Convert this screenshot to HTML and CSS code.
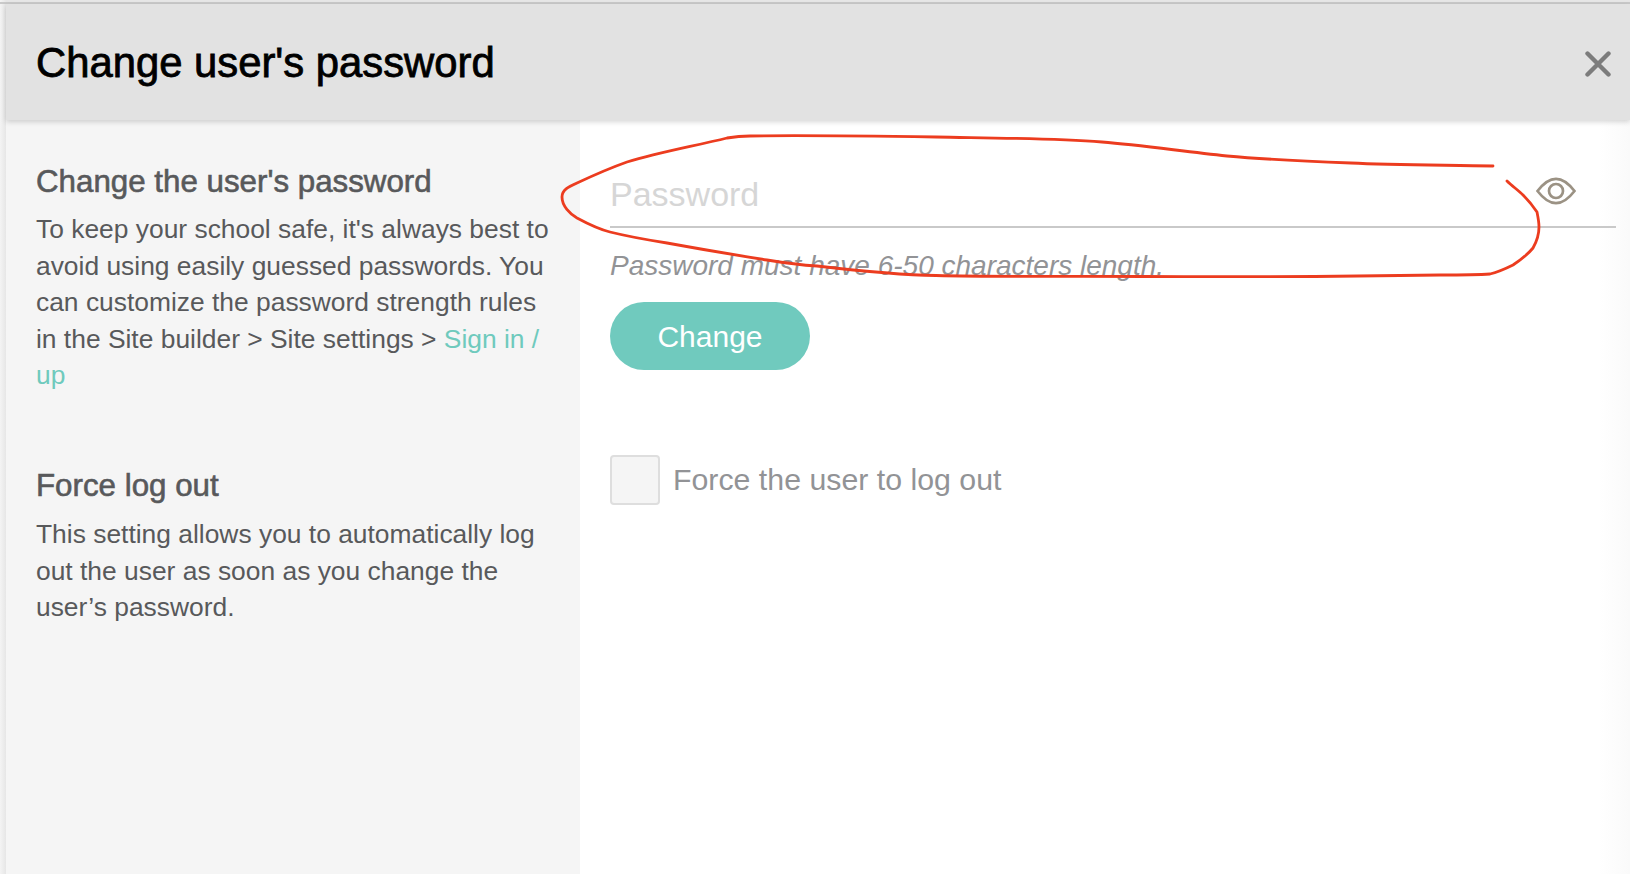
FILE: index.html
```html
<!DOCTYPE html>
<html lang="en">
<head>
<meta charset="utf-8">
<title>Change user's password</title>
<link rel="stylesheet" href="styles.css">
</head>
<body>
<div class="page">
  <div class="top-rule"></div>
  <div class="modal">
    <header class="modal-header">
      <h1 class="modal-title">Change user's password</h1>
      <svg class="close-icon" viewBox="0 0 26 26" width="26" height="26" aria-label="Close"><path d="M2.5 2.5 L23.5 23.5 M23.5 2.5 L2.5 23.5"/></svg>
    </header>
    <div class="modal-body">
      <aside class="side">
        <section class="side-block">
          <h2 class="side-title">Change the user's password</h2>
          <p class="side-text">To keep your school safe, it's always best to avoid using easily guessed passwords. You can customize the password strength rules in the Site builder &gt; Site settings &gt; <a class="side-link">Sign in / up</a></p>
        </section>
        <section class="side-block second">
          <h2 class="side-title">Force log out</h2>
          <p class="side-text">This setting allows you to automatically log out the user as soon as you change the user’s password.</p>
        </section>
      </aside>
      <main class="form">
        <div class="field">
          <input class="field-input" type="text" placeholder="Password">
          <svg class="eye-icon" viewBox="0 0 40 28" width="40" height="28"><path d="M1.5 14 C8 5.5 14 1.8 20 1.8 C26 1.8 32 5.5 38.5 14 C32 22.5 26 26.2 20 26.2 C14 26.2 8 22.5 1.5 14 Z"/><circle cx="20" cy="14" r="7"/></svg>
        </div>
        <p class="hint">Password must have 6-50 characters length.</p>
        <button class="change-btn" type="button">Change</button>
        <label class="check-row">
          <span class="check-box"></span>
          <span class="check-label">Force the user to log out</span>
        </label>
      </main>
    </div>
  </div>
  <svg class="ink" viewBox="0 0 1630 874" width="1630" height="874"><path d="M1493 166 C1440 165 1390 165 1351 163 C1300 161 1260 159 1227 156 C1180 151 1140 145 1102 142 C1050 138 990 138 936 137 C870 136 800 135 750 136 C740 136 733 137 727 138 C695 146 660 152 627 162 C610 168 592 176 577 183 C568 187 562 190 562 197 C562 206 570 214 577 218 C590 225 598 229 610 232 C630 237 648 240 667 243 C700 249 735 255 767 260 C785 263 800 265 817 266 C860 271 900 275 936 275.5 C1000 277 1070 276 1144 276.5 C1260 277 1380 276 1440 275 C1460 275 1476 275 1490 274 C1498 272 1505 269 1513 265 C1522 259 1528 254 1533 248 C1537 241 1539 235 1539 227 C1539 222 1538 217 1537 212 C1533 206 1528 200 1523 195 C1518 190 1512 186 1507 181"/></svg>
</div>
</body>
</html>
```
FILE: styles.css
```css
* { box-sizing: border-box; }
html, body { margin: 0; height: 100%; overflow: hidden; }
body { font-family: "Liberation Sans", Arial, sans-serif; background: #f0f0f0; }
.page { position: relative; display: flex; flex-direction: column; width: 1630px; height: 874px; background: linear-gradient(90deg, #f4f4f4, #e6e6e6 6px); overflow: hidden; }
.top-rule { flex: none; height: 2px; margin-top: 2px; background: #c9c9c9; }
.modal { flex: 1; display: flex; flex-direction: column; min-height: 0; margin-left: 6px; background: #fff; }
.modal-header { position: relative; z-index: 1; flex: none; display: flex; align-items: center; justify-content: space-between; height: 116px; padding: 2px 19px 0 30px; background: #e2e2e2; box-shadow: 0 2px 5px rgba(0,0,0,.16); }
.modal-title { margin: 0; font-size: 41.8px; font-weight: 400; color: #000; -webkit-text-stroke: .8px #000; }
.close-icon { margin-top: 1px; fill: none; stroke: #7c7c7c; stroke-width: 4.4; stroke-linecap: round; }
.modal-body { flex: 1; display: flex; min-height: 0; }
.side { flex: none; width: 574px; padding: 43px 24px 0 30px; background: #f5f5f5; color: #58595b; }
.side-block.second { margin-top: 73px; }
.side-title { margin: 0 0 10px; font-size: 31.3px; line-height: 38px; font-weight: 400; -webkit-text-stroke: .6px #58595b; }
.side-block.second .side-title { margin-bottom: 11px; }
.side-text { margin: 0; font-size: 26.4px; line-height: 36.6px; }
.side-link { color: #6fcabd; }
.form { flex: 1; padding: 36px 14px 0 30px; background: linear-gradient(90deg, #fff 97%, #fafafa 100%); }
.field { display: flex; align-items: center; height: 72px; border-bottom: 2px solid #c9c9c9; }
.field-input { flex: 1; min-width: 0; height: 100%; padding: 6px 0 0; border: 0; outline: 0; background: transparent; font: 34px "Liberation Sans", Arial, sans-serif; color: #333; }
.field-input::placeholder { color: #d6d6d6; opacity: 1; }
.eye-icon { flex: none; margin: 0 40px 0 0; fill: none; stroke: #9b9284; stroke-width: 2.7; }
.hint { margin: 20px 0 0; font-size: 28px; line-height: 36px; font-style: italic; color: #929396; }
.change-btn { display: block; width: 200px; height: 68px; margin-top: 18px; padding: 2px 0 0; border: 0; border-radius: 34px; background: #70cabe; color: #fff; font: 30px "Liberation Sans", Arial, sans-serif; }
.check-row { display: flex; align-items: center; gap: 13px; margin-top: 85px; }
.check-box { width: 50px; height: 50px; border: 2px solid #dedede; border-radius: 4px; background: #f5f5f5; }
.check-label { font-size: 30.3px; color: #929396; }
.ink { position: absolute; left: 0; top: 0; fill: none; stroke: #ec3c1f; stroke-width: 2.8; stroke-linecap: round; pointer-events: none; z-index: 2; }
```
